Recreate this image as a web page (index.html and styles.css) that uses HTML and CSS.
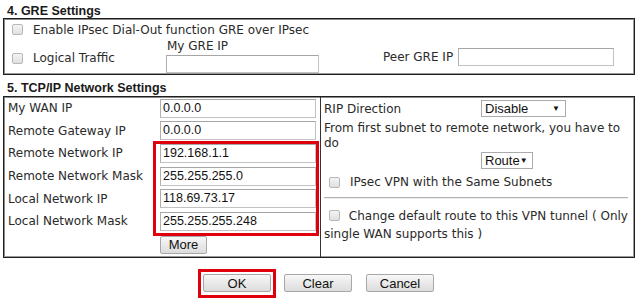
FILE: index.html
```html
<!DOCTYPE html>
<html>
<head>
<meta charset="utf-8">
<link rel="stylesheet" href="styles.css">
</head>
<body>
<div class="page">
  <div class="sec-title">4. GRE Settings</div>
  <div class="box gre">
    <div class="gre-row1"><span class="cb"></span><span>Enable IPsec Dial-Out function GRE over IPsec</span></div>
    <div class="gre-row2">
      <div class="lt"><span class="cb"></span><span>Logical Traffic</span></div>
      <div class="mygre"><div class="lbl">My GRE IP</div><div class="inp w153"></div></div>
      <div class="peer"><span>Peer GRE IP</span><div class="inp w156"></div></div>
    </div>
  </div>
  <div class="sec-title s5">5. TCP/IP Network Settings</div>
  <div class="box tcp">
    <div class="left">
      <div class="frow"><span class="flabel">My WAN IP</span><div class="inp fi">0.0.0.0</div></div>
      <div class="frow"><span class="flabel">Remote Gateway IP</span><div class="inp fi">0.0.0.0</div></div>
      <div class="redgroup">
        <div class="frow"><span class="flabel">Remote Network IP</span><div class="inp fi">192.168.1.1</div></div>
        <div class="frow"><span class="flabel">Remote Network Mask</span><div class="inp fi">255.255.255.0</div></div>
        <div class="frow"><span class="flabel">Local Network IP</span><div class="inp fi">118.69.73.17</div></div>
        <div class="frow"><span class="flabel">Local Network Mask</span><div class="inp fi">255.255.255.248</div></div>
        <div class="red"></div>
      </div>
      <div class="more-row"><div class="btn more">More</div></div>
    </div>
    <div class="right">
      <div class="rip"><span class="rl">RIP Direction</span><div class="sel w83">Disable<span class="arr">▼</span></div></div>
      <div class="para">From first subnet to remote network, you have to do</div>
      <div class="route"><div class="sel w52">Route<span class="arr">▼</span></div></div>
      <div class="chk same"><span class="cb"></span><span>IPsec VPN with the Same Subnets</span></div>
      <div class="hr"></div>
      <div class="para chg"><span class="cb inl"></span> Change default route to this VPN tunnel ( Only single WAN supports this )</div>
    </div>
  </div>
  <div class="buttons">
    <div class="okwrap"><div class="btn b68">OK</div></div>
    <div class="btn b68 clear">Clear</div>
    <div class="btn b68 cancel">Cancel</div>
  </div>
</div>
</body>
</html>
```

FILE: styles.css
```css
* { box-sizing: border-box; }
body { margin: 0; background: #fff; font-family: "DejaVu Sans", Verdana, sans-serif; font-size: 12px; color: #2a2a2a; }
.page { padding: 0 3px; width: 640px; }
.sec-title { font-family: "Liberation Sans", Arial, sans-serif; font-weight: bold; font-size: 12.5px; color: #1a1a1a; height: 18px; line-height: 16px; padding: 3px 0 0 4px; }
.s5 { height: 21px; padding-top: 5px; }
.box { border: 1px solid #1e1e1e; box-shadow: inset -1px -1px 0 #9a9a9a, inset 1px 1px 0 #8a8a8a; width: 632px; }
.gre { height: 57px; padding: 1px 0 0 8px; }
.cb { display: inline-block; flex: none; width: 11px; height: 11px; border: 1px solid #b8b8b8; border-radius: 2px; background: linear-gradient(#f4f4f4, #dfdfdf); margin-right: 10px; vertical-align: -1px; }
.gre-row1 { display: flex; align-items: center; height: 19px; }
.gre-row2 { display: flex; align-items: flex-start; height: 36px; }
.lt { display: flex; align-items: center; width: 154px; height: 18px; margin-top: 10px; }
.mygre .lbl { padding-left: 1px; height: 14px; line-height: 14px; margin-top: 0; }
.mygre .inp { margin-top: 2px; height: 18px; }
.inp { border: 1px solid #c2c2c2; border-top-color: #a6a6a6; border-left-color: #b0b0b0; height: 19px; background: #fff; font-family: "Liberation Sans", Arial, sans-serif; font-size: 12.5px; line-height: 17px; padding-left: 2px; color: #111; }
.w153 { width: 153px; }
.w156 { width: 156px; }
.peer { display: flex; align-items: center; gap: 5px; margin-left: 64px; margin-top: 9px; }
.peer .inp { height: 18px; }
.tcp { display: flex; height: 162px; }
.left { width: 317px; border-right: 1px solid #333; padding: 0 0 0 4px; }
.frow { display: flex; align-items: center; height: 22.6px; }
.flabel { width: 152px; white-space: nowrap; }
.fi { width: 156px; }
.redgroup { position: relative; }
.red { position: absolute; left: 145px; top: -1px; width: 166px; height: 95px; border: 3px solid #e0000b; }
.more-row { padding: 3px 0 0 152px; }
.btn { display: flex; align-items: center; justify-content: center; font-family: "Liberation Sans", Arial, sans-serif; font-size: 13px; color: #111; border: 1px solid #a8a8a8; border-radius: 2px; background: linear-gradient(#f7f7f7, #dcdcdc); height: 18px; }
.more { width: 47px; height: 18px; }
.right { flex: 1; padding: 3px 4px 0 3px; }
.rip { display: flex; align-items: center; height: 17px; }
.rl { width: 157px; }
.sel { display: flex; align-items: center; justify-content: space-between; height: 17px; border: 1px solid #ababab; font-family: "Liberation Sans", Arial, sans-serif; font-size: 13px; color: #111; padding: 0 5px 0 3px; background: #fff; }
.arr { font-size: 8px; }
.w83 { width: 85px; }
.w52 { width: 52px; }
.para { line-height: 15px; margin-top: 4px; }
.route { padding: 1px 0 0 157px; height: 18px; }
.chk { display: flex; align-items: center; height: 26px; padding-left: 5px; }
.chk .cb { margin-right: 10px; }
.hr { border-top: 1px solid #b0b0b0; border-bottom: 1px solid #eee; margin: 2px 2px 0 0; }
.chg { margin-top: 0; padding-top: 8px; line-height: 18px; }
.cb.inl { margin-left: 5px; margin-right: 5px; vertical-align: -1px; }
.buttons { display: flex; align-items: flex-start; padding: 11px 0 0 195px; }
.b68 { width: 68px; height: 18px; }
.okwrap { border: 3px solid #e0000b; padding: 2px 2px 3px 2px; }
.clear { margin: 5px 0 0 8px; }
.cancel { margin: 5px 0 0 14px; }
```
